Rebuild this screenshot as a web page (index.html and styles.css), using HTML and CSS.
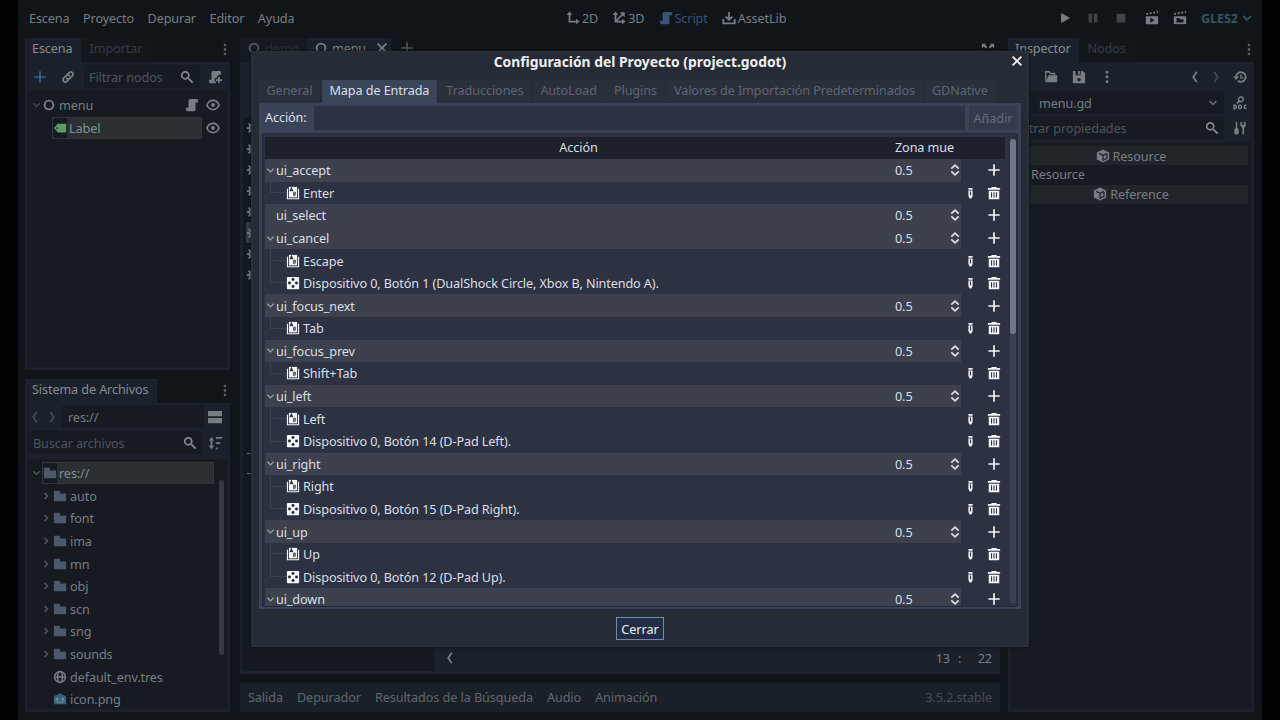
FILE: index.html
```html
<!DOCTYPE html>
<html lang="es">
<head>
<meta charset="UTF-8">
<meta name="viewport" content="width=device-width, initial-scale=1.0">
<title>Configuración del Proyecto</title>
<link rel="stylesheet" href="styles.css">
</head>
<body>

<svg class="sprite" width="0" height="0">
  <symbol id="plus" viewBox="0 0 16 16"><path d="M8 1.5v13M1.5 8h13" fill="none" stroke="currentColor" stroke-width="1.9"/></symbol>
  <symbol id="link" viewBox="0 0 16 16"><g fill="none" stroke="currentColor" stroke-width="2" stroke-linecap="round"><path d="M7 5.500l2.400-2.400a2.500 2.500 0 0 1 3.600 3.600L10 9.500a2.500 2.500 0 0 1-3.500 0"/><path d="M9 10.500l-2.400 2.400a2.500 2.500 0 0 1-3.600-3.600L6 6.500a2.500 2.500 0 0 1 3.500 0"/></g></symbol>
  <symbol id="search" viewBox="0 0 16 16"><path d="M9.500 9.500l5 5" stroke="currentColor" stroke-width="2.200"/><circle cx="6" cy="6" r="4" fill="none" stroke="currentColor" stroke-width="2"/></symbol>
  <symbol id="script" viewBox="0 0 16 16"><path d="M6 1a2 2 0 0 0-2 2v8H1v2a2 2 0 0 0 2 2h7a2 2 0 0 0 2-2V5h3V3a2 2 0 0 0-2-2z" fill="currentColor"/></symbol>
  <symbol id="scriptAdd" viewBox="0 0 16 16"><path d="M6 1a2 2 0 0 0-2 2v8H1v2a2 2 0 0 0 2 2h6v-2H7.500V9.500H10V7h2V5h3V3a2 2 0 0 0-2-2z" fill="currentColor"/><path d="M12.500 8v7M9 11.500h7" stroke="currentColor" stroke-width="2"/></symbol>
  <symbol id="eye" viewBox="0 0 16 16"><path d="M1 8c3-7 11-7 14 0-3 7-11 7-14 0z" fill="none" stroke="currentColor" stroke-width="2"/><circle cx="8" cy="8" r="2.200" fill="currentColor"/></symbol>
  <symbol id="ring" viewBox="0 0 16 16"><circle cx="8" cy="8" r="5" fill="none" stroke="currentColor" stroke-width="2.200"/></symbol>
  <symbol id="label" viewBox="0 0 16 16"><path d="M5.500 3h8.500a1 1 0 0 1 1 1v8a1 1 0 0 1-1 1H5.500L1 8z" fill="currentColor"/><circle cx="4.700" cy="8" r="1" fill="#161b22"/></symbol>
  <symbol id="down" viewBox="0 0 16 16"><path d="M3.500 5.500L8 10l4.500-4.500" fill="none" stroke="currentColor" stroke-width="2"/></symbol>
  <symbol id="right" viewBox="0 0 16 16"><path d="M6 4l4 4-4 4" fill="none" stroke="currentColor" stroke-width="2"/></symbol>
  <symbol id="back" viewBox="0 0 16 16"><path d="M10 2L6 8l4 6" fill="none" stroke="currentColor" stroke-width="2"/></symbol>
  <symbol id="next" viewBox="0 0 16 16"><path d="M6 2l4 6-4 6" fill="none" stroke="currentColor" stroke-width="2"/></symbol>
  <symbol id="dots" viewBox="0 0 16 16"><circle cx="8" cy="2.500" r="1.700" fill="currentColor"/><circle cx="8" cy="8" r="1.700" fill="currentColor"/><circle cx="8" cy="13.500" r="1.700" fill="currentColor"/></symbol>
  <symbol id="split" viewBox="0 0 16 16"><path d="M0 1h16v6H0zM0 9h16v6H0z" fill="currentColor"/></symbol>
  <symbol id="sort" viewBox="0 0 16 16"><path d="M4 1L1 5h2v6H1l3 4 3-4H5V5h2zM9 1h7v2H9zM9 7h5v2H9zM9 13h2v2H9z" fill="currentColor"/></symbol>
  <symbol id="folder" viewBox="0 0 16 16"><path d="M1 2h7v3h7v9H1z" fill="currentColor"/></symbol>
  <symbol id="globe" viewBox="0 0 16 16"><g fill="none" stroke="currentColor" stroke-width="1.700"><circle cx="8" cy="8" r="6.200"/><ellipse cx="8" cy="8" rx="2.700" ry="6.200"/><path d="M2 8h12"/></g></symbol>
  <symbol id="godot" viewBox="0 0 16 16"><path d="M1 5l3-2 1 1 1-2h4l1 2 1-1 3 2v9H1z" fill="#35647d"/><path d="M2 10h3v2h6v-2h3" fill="none" stroke="#7c949d" stroke-width=".8"/><circle cx="5" cy="8" r="1.300" fill="#8a979c"/><circle cx="11" cy="8" r="1.300" fill="#8a979c"/></symbol>
  <symbol id="axis2d" viewBox="0 0 16 16"><path d="M4 3v9h9" fill="none" stroke="currentColor" stroke-width="2"/><path d="M4 .5L.8 4.500h6.400zM15.500 12l-4-3.200v6.400z" fill="currentColor"/></symbol>
  <symbol id="axis3d" viewBox="0 0 16 16"><path d="M4 3v9h9M4 12l8-8" fill="none" stroke="currentColor" stroke-width="2"/><path d="M4 .5L.8 4.500h6.400zM15.500 12l-4-3.200v6.400zM14.500 1.500H9l5.500 5.500z" fill="currentColor"/></symbol>
  <symbol id="asset" viewBox="0 0 16 16"><path d="M8 1v8M4 6.500L8 10l4-3.500M1.500 9v5h13V9" fill="none" stroke="currentColor" stroke-width="2"/></symbol>
  <symbol id="play" viewBox="0 0 16 16"><path d="M4 3v10l9-5z" fill="currentColor" stroke="currentColor" stroke-linejoin="round"/></symbol>
  <symbol id="pause" viewBox="0 0 16 16"><path d="M3 3h4v10H3zM9 3h4v10H9z" fill="currentColor"/></symbol>
  <symbol id="stop" viewBox="0 0 16 16"><rect x="3" y="3" width="10" height="10" rx="1" fill="currentColor"/></symbol>
  <symbol id="clapPlay" viewBox="0 0 16 16"><path d="M1 2.500l2-.5 1 2-2 .5zM5 1.700l2-.5 1 2-2 .4zM9 1.200l2-.5 1 2-2 .5zM13 .5l2-.3v2l-1 .3zM1 6h14v9H1z" fill="currentColor"/><path d="M6 7.500v6l5-3z" fill="#12171c"/></symbol>
  <symbol id="clap" viewBox="0 0 16 16"><path d="M1 2.500l2-.5 1 2-2 .5zM5 1.700l2-.5 1 2-2 .4zM9 1.200l2-.5 1 2-2 .5zM13 .5l2-.3v2l-1 .3z" fill="currentColor"/><path d="M1 6h14v9H1z" fill="currentColor"/><path d="M4 8h3.500v1.500H12V13H4z" fill="#12171c"/></symbol>
  <symbol id="expand" viewBox="0 0 16 16"><path d="M1 2h5L4.800 3.400l2.400 2.400-1.600 1.600-2.400-2.400L1 7zM15 2h-5l1.200 1.400-2.400 2.400 1.600 1.600 2.400-2.400L15 7zM1 14h5l-5-5zM15 14h-5l5-5z" fill="currentColor"/></symbol>
  <symbol id="close" viewBox="0 0 16 16"><path d="M3 3l10 10M13 3L3 13" stroke="currentColor" stroke-width="2.200"/></symbol>
  <symbol id="open" viewBox="0 0 16 16"><path d="M2 13.500V2h4l1 2h5v2" fill="none" stroke="currentColor" stroke-width="1.600"/><path d="M5 6h10v8H2z" fill="currentColor"/></symbol>
  <symbol id="save" viewBox="0 0 16 16"><path d="M1 1h11l3 3v11H1z" fill="currentColor"/><path d="M4 1h6v5H4zM8 9a2 2 0 1 0 .1 0z" fill="#1b222b"/><path d="M7 1h2v4H7z" fill="currentColor"/></symbol>
  <symbol id="history" viewBox="0 0 16 16"><path d="M3.500 8a5.500 5.500 0 1 1 2 4.300" fill="none" stroke="currentColor" stroke-width="2"/><path d="M0 7.500h7l-3.500 4z" fill="currentColor"/><path d="M9 5v4h3" fill="none" stroke="currentColor" stroke-width="1.500"/></symbol>
  <symbol id="doc" viewBox="0 0 16 16"><circle cx="9" cy="3.800" r="2.700" fill="none" stroke="currentColor" stroke-width="1.700"/><path d="M7 6L4.500 8.300" stroke="currentColor" stroke-width="2"/><g fill="none" stroke="currentColor" stroke-width="1.700"><path d="M1.200 10.500v4h1.300q1.300 0 1.300-2t-1.300-2zM15.500 10.700h-1q-1.600 0-1.600 1.800t1.600 1.800h1"/><ellipse cx="8" cy="12.500" rx="1.700" ry="2"/></g></symbol>
  <symbol id="tools" viewBox="0 0 16 16"><path d="M4 1v7" stroke="currentColor" stroke-width="1.700"/><path d="M2.500 8h3l1 2v4l-1 1.500h-3l-1-1.500v-4zM8.500 1h2v3.500h2V1h2v4.500L12.700 8v7h-2V8L8.500 5.500z" fill="currentColor"/></symbol>
  <symbol id="cube" viewBox="0 0 16 16"><path d="M8 .5l7 3.500v8l-7 3.500L1 12V4z" fill="currentColor"/><path d="M3.500 5L8 7.200 12.500 5M8 7.500V13l4.500-2.200V5.500" fill="none" stroke="#1c2226" stroke-width="1.400"/></symbol>
  <symbol id="gear" viewBox="0 0 16 16"><circle cx="8" cy="8" r="4" fill="none" stroke="currentColor" stroke-width="2.500"/><path d="M8 1v3M8 12v3M1 8h3M12 8h3M3 3l2 2M11 11l2 2M13 3l-2 2M3 13l2-2" stroke="currentColor" stroke-width="2"/></symbol>
  <symbol id="key" viewBox="0 0 16 16"><path d="M1 3h1.300v11h11.400V3H15v12H1z" fill="currentColor"/><path d="M3.300 1h9.400v12H3.300z" fill="currentColor"/><path d="M4.600 6l1.600-3.800L7.800 6M5.200 5h2" fill="none" stroke="#2c3242" stroke-width="1.200"/><path d="M8.800 7v4h1.100a1.200 1.200 0 0 0 .4-2.100A.9.900 0 0 0 9.800 7zM8.800 9h1.300" fill="none" stroke="#2c3242" stroke-width="1.100"/></symbol>
  <symbol id="joy" viewBox="0 0 16 16"><rect x="1" y="1" width="14" height="14" rx="1" fill="currentColor"/><g fill="#252b39"><circle cx="8" cy="4" r="1.700"/><circle cx="8" cy="12" r="1.700"/><circle cx="4" cy="8" r="1.700"/><circle cx="12" cy="8" r="1.700"/></g></symbol>
  <symbol id="trash" viewBox="0 0 16 16"><path d="M5 1h6v1.300h4v2H1v-2h4zM2 5.300h12V15H2z" fill="currentColor"/><path d="M5.200 7v6M8 7v6M10.800 7v6" stroke="#2c3242" stroke-width="1.200"/></symbol>
  <symbol id="pencil" viewBox="0 0 6 16"><path d="M.5 2h5v2h-5zM.5 5h5v6.500L4 14.500H2L.5 11.500z" fill="currentColor"/><path d="M3 6v5" stroke="#2c3242" stroke-width="1.300"/></symbol>
  <symbol id="updown" viewBox="0 0 16 16"><path d="M3.800 6.500L8 2.500l4.200 4M3.800 9.500l4.200 4 4.200-4" fill="none" stroke="currentColor" stroke-width="2"/></symbol>
</svg>

<div class="editor">
  <header class="menubar">
    <nav class="menus"><span>Escena</span><span>Proyecto</span><span>Depurar</span><span>Editor</span><span>Ayuda</span></nav>
    <nav class="views">
      <span><svg class="ic"><use href="#axis2d"/></svg>2D</span>
      <span><svg class="ic"><use href="#axis3d"/></svg>3D</span>
      <span class="current"><svg class="ic"><use href="#script"/></svg>Script</span>
      <span><svg class="ic"><use href="#asset"/></svg>AssetLib</span>
    </nav>
    <div class="run">
      <svg class="ic"><use href="#play"/></svg>
      <svg class="ic dim"><use href="#pause"/></svg>
      <svg class="ic dim"><use href="#stop"/></svg>
      <svg class="ic clap"><use href="#clapPlay"/></svg>
      <svg class="ic"><use href="#clap"/></svg>
      <b>GLES2</b><svg class="ic driver"><use href="#down"/></svg>
    </div>
  </header>

  <main class="docks">
    <aside class="left">
      <section class="dock scene">
        <div class="tabs"><span class="tab on">Escena</span><span class="tab">Importar</span><svg class="ic more"><use href="#dots"/></svg></div>
        <div class="panel">
          <div class="tools">
            <svg class="ic blue"><use href="#plus"/></svg>
            <svg class="ic"><use href="#link"/></svg>
            <div class="field">Filtrar nodos<svg class="ic"><use href="#search"/></svg></div>
            <svg class="ic"><use href="#scriptAdd"/></svg>
          </div>
          <div class="tree">
            <div class="node"><svg class="ic arrow"><use href="#down"/></svg><svg class="ic"><use href="#ring"/></svg><span>menu</span><svg class="ic"><use href="#script"/></svg><svg class="ic eye"><use href="#eye"/></svg></div>
            <div class="node child"><div class="picked"><svg class="ic green"><use href="#label"/></svg><span>Label</span></div><svg class="ic eye"><use href="#eye"/></svg></div>
          </div>
        </div>
      </section>

      <section class="dock files">
        <div class="tabs"><span class="tab on">Sistema de Archivos</span><svg class="ic more"><use href="#dots"/></svg></div>
        <div class="panel">
          <div class="path"><svg class="ic dim"><use href="#back"/></svg><svg class="ic dim"><use href="#next"/></svg><div class="field lit">res://</div><svg class="ic split"><use href="#split"/></svg></div>
          <div class="path find"><div class="field">Buscar archivos<svg class="ic"><use href="#search"/></svg></div><svg class="ic"><use href="#sort"/></svg></div>
          <div class="tree">
            <div class="list" id="fileList">
              <div class="file root"><svg class="ic arrow"><use href="#down"/></svg><div class="picked"><svg class="ic folder"><use href="#folder"/></svg><span>res://</span></div></div>
            </div>
            <div class="scroll"></div>
          </div>
        </div>
      </section>
    </aside>

    <section class="center">
      <div class="filetabs">
        <span class="ftab faded"><svg class="ic"><use href="#ring"/></svg>demo</span>
        <span class="ftab on"><svg class="ic"><use href="#ring"/></svg>menu<svg class="ic x"><use href="#close"/></svg></span>
        <svg class="ic add"><use href="#plus"/></svg>
        <svg class="ic expand"><use href="#expand"/></svg>
      </div>
      <div class="code">
        <div class="scripts">
          <div class="scriptlist" id="scriptList"></div>
          <div class="methods"><i></i><i></i></div>
        </div>
        <div class="source"><div class="status"><svg class="ic"><use href="#back"/></svg><span class="pos">13 :&nbsp; 22</span></div></div>
      </div>
      <footer class="bottom"><span>Salida</span><span>Depurador</span><span>Resultados de la Búsqueda</span><span>Audio</span><span>Animación</span><span class="version">3.5.2.stable</span></footer>
    </section>

    <aside class="right">
      <section class="dock inspector">
        <div class="tabs"><span class="tab on">Inspector</span><span class="tab">Nodos</span><svg class="ic more"><use href="#dots"/></svg></div>
        <div class="panel">
          <div class="itools">
            <svg class="ic open"><use href="#open"/></svg><svg class="ic"><use href="#save"/></svg><svg class="ic"><use href="#dots"/></svg>
            <svg class="ic prev"><use href="#back"/></svg><svg class="ic dim"><use href="#next"/></svg><svg class="ic hist"><use href="#history"/></svg>
          </div>
          <div class="iline"><div class="field lit object">menu.gd<svg class="ic arrow"><use href="#down"/></svg></div><svg class="ic"><use href="#doc"/></svg></div>
          <div class="iline"><div class="field">Filtrar propiedades<svg class="ic"><use href="#search"/></svg></div><svg class="ic"><use href="#tools"/></svg></div>
          <div class="props">
            <div class="cat"><svg class="ic"><use href="#cube"/></svg>Resource</div>
            <div class="prop">Resource</div>
            <div class="cat"><svg class="ic"><use href="#cube"/></svg>Reference</div>
          </div>
        </div>
      </section>
    </aside>
  </main>

  <div class="dialog">
    <div class="title">Configuración del Proyecto (project.godot)<svg class="ic close"><use href="#close"/></svg></div>
    <div class="dtabs"><span>General</span><span class="on">Mapa de Entrada</span><span>Traducciones</span><span>AutoLoad</span><span>Plugins</span><span>Valores de Importación Predeterminados</span><span>GDNative</span></div>
    <div class="content">
      <div class="newaction"><label>Acción:</label><input type="text"><button disabled>Añadir</button></div>
      <div class="inputmap">
        <div class="rows">
          <div class="head"><span class="c1">Acción</span><span class="c2">Zona mue</span></div>
          <div id="actions"></div>
        </div>
        <div class="bar"><div class="grip"></div></div>
      </div>
    </div>
    <div class="buttons"><button>Cerrar</button></div>
  </div>
</div>

<script>
function icon(id, cls) {
  return `<svg class="ic ${cls || ''}"><use href="#${id}"/></svg>`;
}

// Acciones del mapa de entrada con sus eventos
const actions = [
  ['ui_accept', ['Enter']],
  ['ui_select', []],
  ['ui_cancel', ['Escape', 'Dispositivo 0, Botón 1 (DualShock Circle, Xbox B, Nintendo A).']],
  ['ui_focus_next', ['Tab']],
  ['ui_focus_prev', ['Shift+Tab']],
  ['ui_left', ['Left', 'Dispositivo 0, Botón 14 (D-Pad Left).']],
  ['ui_right', ['Right', 'Dispositivo 0, Botón 15 (D-Pad Right).']],
  ['ui_up', ['Up', 'Dispositivo 0, Botón 12 (D-Pad Up).']],
  ['ui_down', []]
];

let html = '';
actions.forEach(([name, events]) => {
  const arrow = name === 'ui_select' ? '' : icon('down');
  html += `<div class="row action"><div class="cells"><span class="fold">${arrow}</span><span class="name">${name}</span><span class="value">0.5</span>${icon('updown')}</div>${icon('plus', 'act')}</div>`;
  events.forEach(text => {
    const type = text.startsWith('Dispositivo') ? 'joy' : 'key';
    html += `<div class="row event"><span class="branch"></span>${icon(type)}<span class="name">${text}</span>${icon('pencil', 'edit')}${icon('trash', 'act')}</div>`;
  });
});
document.getElementById('actions').innerHTML = html;

// Sistema de archivos
let files = '';
['auto', 'font', 'ima', 'mn', 'obj', 'scn', 'sng', 'sounds'].forEach(f => {
  files += `<div class="file">${icon('right', 'arrow')}${icon('folder', 'folder')}<span>${f}</span></div>`;
});
files += `<div class="file"><i class="gap"></i>${icon('globe')}<span>default_env.tres</span></div>`;
files += `<div class="file"><i class="gap"></i>${icon('godot')}<span>icon.png</span></div>`;
document.getElementById('fileList').innerHTML += files;

let scripts = '';
for (let i = 0; i < 8; i++) {
  scripts += `<div class="${i === 5 ? 'sel' : ''}">${icon('gear')}</div>`;
}
document.getElementById('scriptList').innerHTML = scripts;
</script>

</body>
</html>
```

FILE: styles.css
```css
* {
  box-sizing: border-box;
}
body {
  margin: 0;
  background-color: #000;
  font-family: "Noto Sans", sans-serif;
  font-size: 12.65px;
  letter-spacing: -0.11px;
  line-height: 20px;
  color: #787d83;
  white-space: nowrap;
  overflow: hidden;
}
.sprite {
  display: block;
}
.ic {
  width: 14px;
  height: 14px;
  flex: none;
  display: block;
}
.dim {
  opacity: 0.45;
}
.editor {
  position: relative;
  width: 1244px;
  height: 720px;
  margin: 0 auto;
  background-color: #10151a;
  display: flex;
  flex-direction: column;
}

/* menu superior */
.menubar {
  height: 38px;
  padding: 0 8px 2px 11px;
  display: flex;
  align-items: center;
}
.menus {
  display: flex;
  gap: 13.500px;
  width: 537px;
}
.views {
  display: flex;
  gap: 14px;
  width: 474px;
}
.views span {
  display: flex;
  align-items: center;
  gap: 2px;
}
.views .current {
  color: #3b5277;
}
.run {
  display: flex;
  align-items: center;
  gap: 14px;
  margin-left: auto;
}
.run .clap {
  margin-left: 3px;
}
.run b {
  color: #375463;
}
.run .driver {
  color: #375463;
  margin-left: -12px;
}

.docks {
  flex: 1;
  display: flex;
  min-height: 0;
  padding: 0 8px 8px 7px;
}
.left {
  width: 205px;
  display: flex;
  flex-direction: column;
  gap: 9px;
}
.dock {
  display: flex;
  flex-direction: column;
}
.scene {
  height: 332px;
}
.files {
  flex: 1;
  min-height: 0;
}
.tabs {
  height: 24px;
  display: flex;
  align-items: center;
}
.tab {
  height: 24px;
  line-height: 21px;
  padding: 0 9px;
  color: #363c42;
  background-color: #12171c;
}
.tab.on {
  background-color: #1a212a;
  color: #858b92;
  padding: 0 8px 0 7px;
}
.tabs .more {
  margin-left: auto;
  margin-right: -2px;
  opacity: 0.7;
  height: 13px;
  margin-bottom: 2px;
}
.panel {
  flex: 1;
  min-height: 0;
  background-color: #1a212a;
  padding: 1px 3px 3px;
  display: flex;
  flex-direction: column;
}
.tools {
  height: 27px;
  display: flex;
  align-items: center;
  padding: 0 5px;
  gap: 14px;
}
.blue {
  color: #3a5f8d;
}
.field {
  height: 23px;
  background-color: #161b23;
  color: #4d545b;
  display: flex;
  align-items: center;
  justify-content: space-between;
  flex: 1;
}
.field.lit {
  color: #757b80;
}
.tools .field {
  margin: 0 -6px 0 -5px;
  padding: 0 6px 0 5px;
}
.field .ic {
  color: #858a8e;
}
.tree {
  flex: 1;
  min-height: 0;
  background-color: #161a21;
  padding: 4px;
}
.node {
  height: 22.600px;
  display: flex;
  align-items: center;
}
.node .arrow {
  width: 11px;
  opacity: 0.5;
}
.scene .tree {
  padding: 4px 7px 0 3px;
}
.node span {
  margin-left: 3px;
  flex: 1;
}
.node .eye {
  margin-left: 7px;
}
.node.child {
  padding-left: 21px;
}
.picked {
  flex: 1;
  height: 22px;
  background-color: #2a2f32;
  display: flex;
  align-items: center;
  border: 1px solid #30363a;
  color: #888d90;
}
.child .picked {
  margin-right: 4px;
}
.child .picked span {
  margin-left: 2px;
}
.child .eye {
  margin-left: 0;
}
.picked .ic {
  background-color: #161b22;
  height: 20px;
}
.green {
  color: #5b9b68;
}

.path {
  height: 25px;
  display: flex;
  align-items: center;
  padding-right: 5px;
}
.path .dim + .dim {
  margin-left: 3px;
}
.path .field {
  margin-left: 3px;
  padding: 0 5px 0 6px;
}
.path .split {
  margin-left: 4px;
}
.path.find {
  margin-top: 1px;
}
.find .field {
  margin: 0 6px 0 0;
  padding-left: 5px;
}
.files .tree {
  margin-top: 4px;
  padding: 3px 3px 0 3px;
  display: flex;
  overflow: hidden;
}
.list {
  flex: 1;
}
.file {
  height: 22.600px;
  display: flex;
  align-items: center;
  padding-left: 9px;
}
.file.root {
  padding-left: 0;
  margin-right: 9px;
}
.file .arrow {
  width: 12px;
  height: 12px;
  opacity: 0.6;
}
.file.root .arrow {
  width: 11px;
}
.file .gap {
  width: 12px;
}
.file > .ic:nth-child(2) {
  margin: 0 3px 0 1px;
}
.file .picked span {
  margin-left: 2px;
}
.folder {
  color: #4c586c;
}
.scroll {
  width: 5px;
  margin: 18px 0 54px -4px;
  background-color: #33393f;
  border-radius: 2px;
}

/* editor de scripts */
.center {
  width: 760px;
  margin: 0 8px 0 10px;
  display: flex;
  flex-direction: column;
}
.filetabs {
  height: 24px;
  display: flex;
  align-items: center;
}
.ftab {
  height: 24px;
  display: flex;
  align-items: center;
  gap: 4px;
  padding: 0 8px 4px 7px;
  background-color: #141a20;
}
.ftab.faded {
  color: #2b3136;
}
.ftab.faded .ic {
  color: #555b61;
}
.ftab.on {
  background-color: #1a212a;
  padding-right: 2px;
}
.ftab .x {
  margin-left: 5px;
}
.filetabs .add {
  margin: 0 0 4px 9px;
  opacity: 0.6;
}
.filetabs .expand {
  margin-left: auto;
  margin-right: 5px;
  margin-bottom: 3px;
}
.code {
  flex: 1;
  background-color: #1a212a;
  display: flex;
  padding: 56px 3px 3px;
}
.scripts {
  width: 191px;
  display: flex;
  flex-direction: column;
  background-color: #141920;
}
.scriptlist {
  height: 264px;
  padding: 0 3px;
}
.scriptlist div {
  height: 20.900px;
  display: flex;
  align-items: center;
}
.scriptlist .sel {
  background-color: #34393e;
}
.methods {
  padding: 71px 4px 0;
}
.methods i {
  display: block;
  width: 6px;
  height: 1px;
  margin-bottom: 19px;
  background-color: #6b7075;
}
.source {
  flex: 1;
  display: flex;
  align-items: flex-end;
}
.status {
  flex: 1;
  height: 27px;
  display: flex;
  align-items: center;
  justify-content: space-between;
  padding: 0 5px 0 9px;
}
.pos {
  word-spacing: 5px;
}
.bottom {
  height: 29px;
  margin-top: 9px;
  padding: 0 8px 2px;
  background-color: #1a2027;
  display: flex;
  align-items: center;
  gap: 14px;
  color: #61676d;
  letter-spacing: -0.08px;
}
.bottom .version {
  margin-left: auto;
  color: #464c52;
}

/* inspector */
.right {
  flex: 1;
  display: flex;
}
.inspector {
  flex: 1;
}
.itools {
  height: 27px;
  display: flex;
  align-items: center;
  padding: 0 4px 0 33px;
  gap: 14px;
}
.itools .prev {
  margin-left: auto;
}
.itools .prev + .dim {
  margin-left: -7px;
}
.itools .hist {
  margin-left: -4px;
}
.iline {
  height: 25.500px;
  display: flex;
  align-items: center;
  padding-right: 4px;
  gap: 9px;
}
.iline .field {
  padding: 0 5px;
}
.iline .object {
  padding-left: 28px;
}
.object .arrow {
  width: 12px;
  opacity: 0.7;
}
.props {
  flex: 1;
  margin-top: 1px;
  padding: 4px 3px;
  background-color: #161a21;
}
.cat {
  height: 19px;
  background-color: #1f2529;
  display: flex;
  align-items: center;
  justify-content: center;
  gap: 3px;
}
.prop {
  height: 19.500px;
  line-height: 19px;
  padding-left: 17px;
}

/* ventana de configuracion */
.dialog {
  position: absolute;
  left: 233px;
  top: 51px;
  width: 778px;
  height: 596px;
  background-color: #252c35;
  border: 1px solid #2b313a;
  box-shadow: 0 0 3px #0c1014;
  padding: 0 7px;
  display: flex;
  flex-direction: column;
  color: #dcdfe6;
}
.title {
  height: 28px;
  line-height: 20px;
  font-size: 13.85px;
  letter-spacing: 0;
  font-weight: bold;
  text-align: center;
  color: #eef0f4;
}
.title .close {
  position: absolute;
  right: 4px;
  top: 2px;
}
.dtabs {
  display: flex;
  height: 23px;
  line-height: 20px;
  color: #5e6574;
  letter-spacing: -0.09px;
}
.dtabs span {
  padding: 0 8px 0 7.500px;
  margin-right: 1.500px;
  background-color: #292f3b;
}
.dtabs .on {
  background-color: #3b455a;
  color: #dcdfe6;
}
.content {
  height: 506px;
  background-color: #3a4357;
  padding: 3px 3px 2px;
  display: flex;
  flex-direction: column;
}
.newaction {
  height: 24px;
  display: flex;
}
.newaction label {
  width: 52px;
  padding: 1px 0 0 3px;
}
.newaction input {
  flex: 1;
  min-width: 0;
  border: none;
  background-color: #2c3242;
}
.newaction button {
  width: 48px;
  margin: 0 1px 0 4px;
  padding: 0;
  border: none;
  background-color: #323a4b;
  color: #656c7b;
  font: inherit;
}
.inputmap {
  flex: 1;
  min-height: 0;
  margin-top: 3px;
  padding: 3px 0 0 2px;
  border: 1px solid #222938;
  background-color: #2c3242;
  display: flex;
  overflow: hidden;
}
.rows {
  width: 740px;
  flex: none;
}
.head {
  height: 22px;
  background-color: #1c212b;
  display: flex;
}
.c1 {
  width: 627px;
  text-align: center;
}
.c2 {
  padding-left: 3px;
}
.row {
  height: 22.580px;
  display: flex;
  align-items: center;
}
.cells {
  width: 696px;
  height: 22.580px;
  background-color: #3c414d;
  display: flex;
  align-items: center;
}
.fold {
  width: 11px;
  flex: none;
}
.fold .ic {
  width: 11px;
  height: 11px;
  opacity: 0.6;
}
.cells .name {
  width: 619px;
  flex: none;
}
.value {
  width: 53px;
  flex: none;
}
.act {
  margin-left: auto;
  margin-right: 4px;
  color: #f4f5f8;
}
.event .ic {
  color: #f4f5f8;
}
.branch {
  width: 16px;
  height: 22.580px;
  margin: -22px 0 0 5px;
  border-left: 1px solid #3c4252;
  border-bottom: 1px solid #3c4252;
}
.event .name {
  margin-left: 3px;
}
.event .edit {
  width: 5px;
  margin-left: auto;
}
.event .act {
  margin-left: 14px;
}
.bar {
  width: 6px;
  flex: none;
  margin: 2px 0 2px 5px;
  background-color: #394152;
  border-radius: 3px;
}
.grip {
  height: 195px;
  background-color: #6e7688;
  border-radius: 3px;
}
.buttons {
  padding-top: 8px;
  text-align: center;
}
.buttons button {
  width: 48px;
  height: 23px;
  padding: 0;
  border: 1px solid #6d87b8;
  background-color: #242e42;
  color: #eef0f4;
  font: inherit;
}
```
